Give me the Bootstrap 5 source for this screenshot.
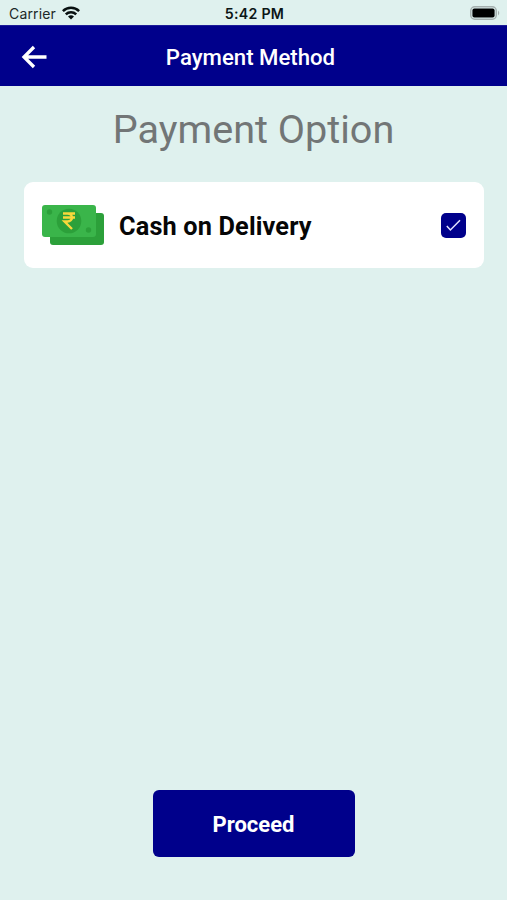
<!DOCTYPE html>
<html lang="en">
<head>
<meta charset="utf-8">
<meta name="viewport" content="width=device-width, initial-scale=1">
<title>Payment Method</title>
<link href="https://cdn.jsdelivr.net/npm/bootstrap@5.3.0/dist/css/bootstrap.min.css" rel="stylesheet">
<style>
  body { background: #dff1ee; font-family: Roboto, "Liberation Sans", sans-serif; }
  svg { display: block; flex: none; }
  .screen { height: 900px; overflow: hidden; }
  .status-bar { display: grid; grid-template-columns: 1fr auto 1fr; height: 25px; padding: 1px 6px 0 9px; font: 14px/24px Inter, sans-serif; color: #1c2828; }
  .carrier { letter-spacing: .15px; padding-top: 2px; line-height: 22px; }
  .wifi { margin-left: 6px; }
  .clock { font-weight: 600; font-size: 14.2px; letter-spacing: .25px; color: #0c1616; margin-right: 1px; padding-top: 2px; line-height: 22px; }
  .app-bar { display: grid; grid-template-columns: 1fr auto 1fr; height: 61px; background: #00008b; padding: 2px 27px 0 21px; border-top: 1px solid #1c1c98; }
  .app-title { font-size: 22.2px; font-weight: 500; line-height: 30px; margin: 0; }
  .page-title { font-size: 39.6px; font-weight: 400; line-height: 48px; color: #727676; margin: 20px 0 28px; }
  .option { height: 86px; margin: 0 23px 0 24px; border: 0; border-radius: 9px; padding: 0 18px; }
  .option-name { font-size: 25.3px; font-weight: 700; letter-spacing: .15px; line-height: 32px; color: #060606; margin: 4px 0 0 15px; }
  .check-box { width: 25px; height: 25px; border-radius: 5px; background: #00008b; }
  .proceed { width: 202px; height: 67px; margin-bottom: 43px; border: 0; border-radius: 6px; background: #00008b; color: #fff; font-size: 22px; font-weight: 700; padding-top: 7px; }
  .proceed:hover { background: #0000a0; color: #fff; }
</style>
</head>
<body>
<div class="screen d-flex flex-column">
  <div class="status-bar align-items-center">
    <div class="d-flex align-items-center">
      <span class="carrier">Carrier</span>
      <svg class="wifi" width="18" height="14" viewBox="0 0 18 14" fill="none" stroke="#081010" stroke-width="2.5"><path d="M.9 5.2a11.5 11.5 0 0 1 16.2 0M3.8 8.3a7.4 7.4 0 0 1 10.4 0"/><path d="M6 10.6a4.3 4.3 0 0 1 6 0l-3 3z" fill="#081010" stroke="none"/></svg>
    </div>
    <span class="clock">5:42 PM</span>
    <svg class="ms-auto" width="31" height="14" viewBox="0 0 31 14"><rect x=".75" y=".75" width="25.5" height="12.5" rx="4" fill="#dff1ee" stroke="#a5b0af" stroke-width="1.5"/><rect x="2.4" y="2.4" width="22.2" height="9.2" rx="2" fill="#000"/><path d="M28 4.5q2.5 2.5 0 5z" fill="#a5b0af"/></svg>
  </div>
  <header class="app-bar align-items-center text-white">
    <svg width="27" height="24" viewBox="0 0 27 24" fill="none" stroke="#fff" stroke-width="3.3"><path d="M25.5 12H3M13 2 3 12l10 10"/></svg>
    <h1 class="app-title">Payment Method</h1>
  </header>
  <main class="flex-grow-1 d-flex flex-column">
    <h2 class="page-title text-center">Payment Option</h2>
    <label class="option card flex-row align-items-center">
      <svg width="62" height="41" viewBox="0 0 62 41"><rect x="8" y="8" width="54" height="32" rx="3" fill="#2ca03a"/><rect width="54" height="32" rx="3" fill="#3ab54a"/><circle cx="27" cy="16" r="12.3" fill="#2ca03a"/><circle cx="7.5" cy="7" r="2.7" fill="#2ca03a"/><circle cx="46.5" cy="25" r="2.7" fill="#2ca03a"/><path d="M21 8.5h12M21 12.5h12M21 8.5h4.5c6 0 6 8 0 8H22.5l7.5 7.5" fill="none" stroke="#f9d83c" stroke-width="2.4"/></svg>
      <span class="option-name">Cash on Delivery</span>
      <span class="check-box ms-auto d-flex align-items-center justify-content-center"><svg width="15" height="13" viewBox="0 0 15 13" fill="none" stroke="#e4e4ff" stroke-width="1.5"><path d="m.8 7 3.6 4L14 1.2"/></svg></span>
    </label>
    <button type="button" class="proceed btn mt-auto mx-auto">Proceed</button>
  </main>
</div>
<script src="https://cdn.jsdelivr.net/npm/bootstrap@5.3.0/dist/js/bootstrap.bundle.min.js"></script>
</body>
</html>
